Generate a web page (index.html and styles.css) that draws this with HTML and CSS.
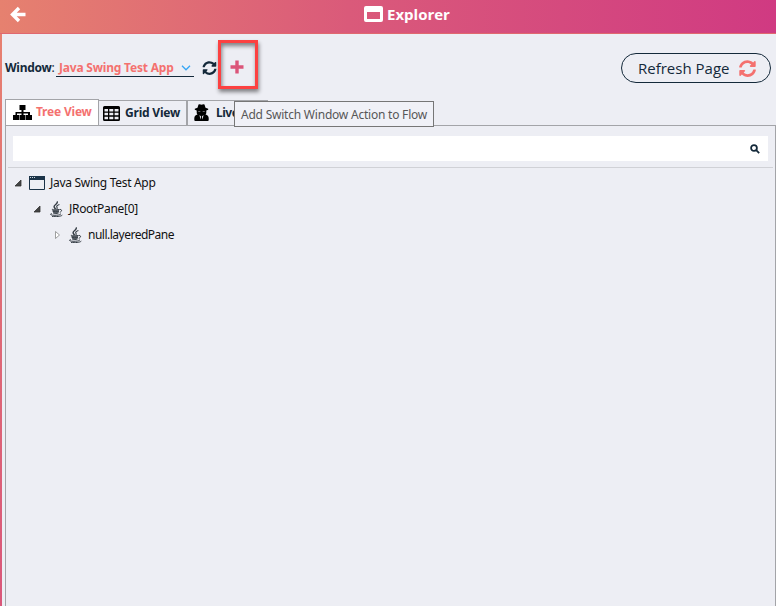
FILE: index.html
```html
<!DOCTYPE html>
<html lang="en">
<head>
<meta charset="utf-8">
<title>Explorer</title>
<link rel="stylesheet" href="styles.css">
</head>
<body>
<svg class="defs" aria-hidden="true">
  <symbol id="sync" viewBox="0 0 512 512"><path fill="currentColor" d="M371 134c-33-31-75-47-120-47-79 0-148 54-167 131-1 6-6 9-12 9H15c-7 0-13-7-12-14C24 94 127 5 251 5c68 0 129 27 175 70l36-36c15-15 41-4 41 17v129c0 13-11 24-24 24H350c-21 0-32-26-17-41zM33 301h129c21 0 32 26 17 41l-38 38c33 31 75 47 120 47 79 0 148-54 167-131 1-6 6-9 12-9h57c7 0 13 7 12 14-21 119-124 208-248 208-68 0-129-27-175-70l-36 36C35 490 9 479 9 458V325c0-13 11-24 24-24z"/></symbol>
  <symbol id="java" viewBox="0 0 14 16"><g fill="none" stroke="#333b43"><path stroke-width="1.5" d="M8.200.4C9.400 3 5 3.600 5.100 5.600c0 1 1 1.600 1.300 2.600"/><path stroke-width="1.100" d="M10.400 3.500C8.500 4.200 7 5 8 6.400c.5.700.2 1.200-.3 1.700"/><path d="M3.500 8.200c-2 .8 2 1.100 6.800.3M3.500 10.200c1.500.8 4.500.8 6.500 0M4.200 12c1.500.7 3.700.6 5.300 0M10.600 8.500c3-.5 2.200 2.300.2 2.800"/><path d="M2.800 12.500c-3.600 1.300 1 2 5 1.700 3-.2 4.700-.9 3.200-1.700M3 15.400c4 .5 9 .1 10.300-1.300"/></g><path fill="#333b43" fill-opacity=".75" d="M3.500 8.500h6.800l-1 3.800H4.400z"/></symbol>
</svg>
<div class="window">
  <header class="titlebar">
    <svg class="back" viewBox="0 0 16 16"><path d="M9 1.500 2.500 8 9 14.500M3 8h12.500"/></svg>
    <svg class="titleicon" viewBox="0 0 19 16"><path fill="#fff" fill-rule="evenodd" d="M2 0h15a2 2 0 0 1 2 2v12a2 2 0 0 1-2 2H2a2 2 0 0 1-2-2V2a2 2 0 0 1 2-2zm1 6v7h13V6z"/></svg>
    <h1>Explorer</h1>
  </header>
  <main>
    <div class="toolbar">
      <span class="label"><b>Window</b>:</span>
      <div class="select"><span>Java Swing Test App</span><svg class="chevron" viewBox="0 0 10 6"><path d="M1 .8 5 4.800 9 .8"/></svg></div>
      <svg class="reload"><use href="#sync"/></svg>
      <div class="highlight"><svg viewBox="0 0 14 14"><path fill="#db5579" d="M5.300.5h3.400v4.800h4.800v3.400H8.700v4.800H5.300V8.700H.5V5.300h4.800z"/></svg></div>
      <button class="refresh"><span>Refresh Page</span><svg><use href="#sync"/></svg></button>
    </div>
    <nav class="tabs">
      <div class="tab active"><svg class="treeicon" viewBox="0 0 19 15"><path d="M6.500 0h6v5h-2v2h6.500v3h2v5h-6v-5h2V8.500h-4.500V10h2v5h-6v-5h2V8.500H4V10h2v5H0v-5h2.500V7h6V5h-2z"/></svg><span>Tree View</span></div>
      <div class="tab grid"><svg class="gridicon" viewBox="0 0 17 15"><path fill-rule="evenodd" d="M1.500 0h14Q17 0 17 1.500v12q0 1.500-1.500 1.500h-14Q0 15 0 13.500v-12Q0 0 1.500 0zM1.500 3v2.500H5V3zM6.300 3v2.500h4V3zM11.600 3v2.500h3.900V3zM1.500 6.800v2.500H5V6.800zM6.300 6.800v2.500h4V6.800zM11.600 6.800v2.500h3.900V6.800zM1.500 10.700v2.600H5v-2.600zM6.300 10.700v2.600h4v-2.600zM11.600 10.700v2.600h3.900v-2.600z"/></svg><span>Grid View</span></div>
      <div class="tab live"><svg class="spyicon" viewBox="0 0 15 17"><path fill-rule="evenodd" d="M4.500.5Q6 0 7.500.8 9 0 10.500.5l1 3.300 2.700.9v1l-1.900.8v2.300q0 1-.8 1.700 3 .8 3.200 3.500V16q0 1-1 1H1.300q-1 0-1-1v-2q.2-2.700 3.200-3.500-.8-.7-.8-1.700V6.500L.8 5.700v-1l2.700-.9zM4.500 6.900v.9L7 7.200zM8 7.200l2.500.6v-.9zM5.500 11l.9 4.500.7-3zM9.500 11l-1.600 1.500.7 3z"/></svg><span>Live</span></div>
      <div class="tooltip"><span>Add Switch Window Action to Flow</span></div>
    </nav>
    <section class="panel">
      <div class="search"><svg viewBox="0 0 10 10"><circle cx="4" cy="4" r="2.900"/><path d="m6.200 6.200 3 3"/></svg></div>
      <div class="tree">
        <div class="row"><svg class="arrow" viewBox="0 0 8 8"><path d="M7 1v6H1z"/></svg><svg class="winicon" viewBox="0 0 16 14"><path fill="none" stroke="#1b3348" d="M.5.5h15v13H.5z"/><path fill="#1b3348" d="M0 0h16v4H0z"/><path fill="#cfd8df" d="M1 1h1v1H1zM3 1h1v1H3zM5 1h1v1H5z"/></svg><span class="t1">Java Swing Test App</span></div>
        <div class="row child"><svg class="arrow" viewBox="0 0 8 8"><path d="M7 1v6H1z"/></svg><svg class="javaicon"><use href="#java"/></svg><span class="t2">JRootPane[0]</span></div>
        <div class="row grandchild"><svg class="arrow closed" viewBox="0 0 8 8"><path d="M1.500.5v7L5.500 4z"/></svg><svg class="javaicon"><use href="#java"/></svg><span class="t3">null.layeredPane</span></div>
      </div>
    </section>
  </main>
</div>
</body>
</html>
```
FILE: styles.css
```css
* { box-sizing: border-box; }
body { margin: 0; font-family: "Noto Sans", "Open Sans", sans-serif; font-size: 12px; color: #14293a; overflow: hidden; }
svg { display: block; flex: none; }
.defs { display: none; }
.window { height: 606px; padding-left: 2px; display: flex; flex-direction: column; background: linear-gradient(135deg, #e8836f 0, #df6b76 22%, #d8527b 50%, #cd3383 85%, #cc3084 100%); background-size: 776px 606px; }
.titlebar { height: 34px; flex: none; display: flex; align-items: center; padding-bottom: 5px; margin-left: -2px; background: linear-gradient(90deg, #e6816f, #da5a7a 45%, #d03a82); border-bottom: 1px solid #e0686f; color: #fff; }
.back { width: 16px; height: 17px; margin-left: 10px; }
.back path { fill: none; stroke: #fff; stroke-width: 3.400; }
.titleicon { width: 19px; height: 16px; margin-left: 338px; }
h1 { margin: 0 0 0 4px; font: bold 15px/20px "Open Sans", sans-serif; width: 66px; white-space: nowrap; letter-spacing: 0; }
main { flex: 1; background: #edeef4; display: flex; flex-direction: column; }
.toolbar { height: 65px; flex: none; display: flex; align-items: flex-start; padding-left: 3px; }
.label { width: 51px; margin-top: 26px; line-height: 16px; white-space: nowrap; letter-spacing: -.25px; }
.select { width: 138px; height: 18px; margin-top: 25px; border-bottom: 1px solid #14293a; display: flex; align-items: center; padding: 0 3px; justify-content: space-between; color: #f4716f; font-weight: bold; line-height: 16px; white-space: nowrap; letter-spacing: -.2px; }
.chevron { width: 10px; height: 6px; }
.chevron path { fill: none; stroke: #36a5f4; stroke-width: 1.300; }
.reload { width: 15px; height: 14px; margin: 27px 0 0 8px; }
.highlight { width: 40px; height: 49px; margin: 6px 0 0 1px; border: 3px solid #fc4141; box-shadow: 1px 3px 4px #0007, inset 1px 3px 4px #0007; display: flex; align-items: center; justify-content: center; padding: 4px 2px 0 0; }
.highlight svg { width: 14px; height: 14px; }
.refresh { margin: 19px 5px 0 auto; width: 150px; height: 30px; padding: 0 14px 0 16px; border: 1px solid #14293a; border-radius: 15px; background: transparent; color: #14293a; font: 15px/20px "Open Sans", sans-serif; display: flex; align-items: center; justify-content: space-between; white-space: nowrap; }
.refresh svg { color: #f4716f; width: 17px; height: 17px; }
.tabs { position: relative; height: 26px; flex: none; display: flex; align-items: flex-end; padding-left: 3px; }
.tab { height: 25px; border-top: 1px solid #a3a4a8; border-right: 1px solid #a3a4a8; display: flex; align-items: center; padding-left: 4px; font-weight: bold; line-height: 16px; white-space: nowrap; letter-spacing: -.2px; }
.tab.active { width: 94px; height: 26px; border-left: 1px solid #a3a4a8; padding: 0 0 1px 7px; background: #fff; color: #f4716f; }
.tab.grid { width: 88px; }
.tab.live { width: 81px; border-left: 1px solid #a3a4a8; border-right: 0; }
.treeicon { width: 19px; height: 15px; margin-right: 4px; }
.gridicon { width: 17px; height: 15px; margin-right: 5px; }
.spyicon { width: 15px; height: 17px; margin: 0 7px 1px 2px; }
.live span { letter-spacing: -.5px; }
.tooltip { position: absolute; left: 232px; top: 2px; width: 200px; height: 26px; border: 1px solid #767676; background: #f0f1f7; color: #575757; line-height: 25px; padding-left: 6px; white-space: nowrap; z-index: 2; letter-spacing: -.22px; }
.panel { flex: 1; margin-left: 3px; border: solid #a3a4a8; border-width: 1px 1px 0; padding: 10px 2px 0; }
.search { height: 25px; margin: 0 5px 6px; background: #fff; display: flex; align-items: center; justify-content: flex-end; padding-right: 8px; }
.search svg { width: 10px; height: 10px; }
.search circle, .search path { fill: none; stroke: #14293a; stroke-width: 1.800; }
.tree { border-top: 1px solid #d0d1d6; padding-top: 2px; color: #111; }
.row { display: flex; align-items: center; height: 26px; padding-left: 6px; white-space: nowrap; }
.child { padding-left: 25px; }
.grandchild { padding-left: 46px; }
.arrow { width: 8px; height: 8px; margin-right: 7px; fill: #444; stroke: #333; stroke-width: .8; }
.child .arrow { margin-right: 8px; }
.row .arrow.closed { fill: #fff; stroke: #888; margin-right: 6px; }
.winicon { width: 16px; height: 14px; margin-right: 5px; }
.javaicon { width: 14px; height: 16px; margin-right: 6px; }
.row span { line-height: 18px; letter-spacing: -.3px; }
.row .t3 { letter-spacing: -.5px; }
```
